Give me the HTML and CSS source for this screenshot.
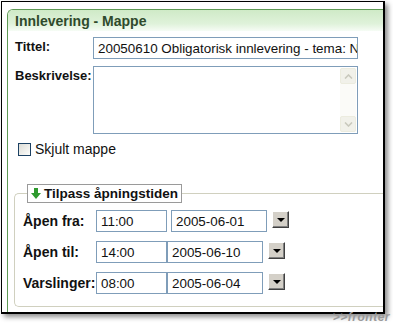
FILE: index.html
```html
<!DOCTYPE html>
<html lang="no">
<head>
  <meta charset="UTF-8">
  <title>Innlevering - Mappe</title>
  <link rel="stylesheet" href="styles.css">
</head>
<body>
  <div class="frame">
    <div class="panel">
      <div class="panel-head">Innlevering - Mappe</div>
      <div class="panel-body">
        <div class="field">
          <label class="label" for="tittel">Tittel:</label>
          <div class="input wide" id="tittel">20050610 Obligatorisk innlevering - tema: Ni</div>
        </div>
        <div class="field">
          <label class="label">Beskrivelse:</label>
          <div class="textarea">
            <div class="scroll">
              <span class="sbtn up"><svg width="9" height="5" viewBox="0 0 9 5"><path d="M1 4.5 4.5 1 8 4.5" fill="none" stroke="#c9c9bd" stroke-width="1.6"/></svg></span>
              <span class="sbtn down"><svg width="9" height="5" viewBox="0 0 9 5"><path d="M1 .5 4.5 4 8 .5" fill="none" stroke="#c9c9bd" stroke-width="1.6"/></svg></span>
            </div>
          </div>
        </div>
        <div class="check">
          <span class="box"></span>
          <span>Skjult mappe</span>
        </div>

        <div class="fieldset">
          <div class="legend">
            <svg width="10" height="11" viewBox="0 0 10 11"><path d="M3 0h4v5h3l-5 6-5-6h3z" fill="#2e9a2e"/></svg>
            Tilpass åpningstiden
          </div>
          <div class="row">
            <span class="label small">Åpen fra:</span>
            <div class="input time">11:00</div>
            <div class="input date gap">2005-06-01</div>
            <span class="pick"><i></i></span>
          </div>
          <div class="row">
            <span class="label small">Åpen til:</span>
            <div class="input time">14:00</div>
            <div class="input date">2005-06-10</div>
            <span class="pick"><i></i></span>
          </div>
          <div class="row">
            <span class="label small">Varslinger:</span>
            <div class="input time">08:00</div>
            <div class="input date">2005-06-04</div>
            <span class="pick"><i></i></span>
          </div>
        </div>
      </div>
    </div>
  </div>
  <div class="brand">&gt;&gt;fronter</div>
</body>
</html>
```

FILE: styles.css
```css
* {
  box-sizing: border-box;
}

body {
  margin: 0;
  padding: 1px 0 0 1px;
  background: #fff;
  font-family: 'Liberation Sans', Arial, sans-serif;
  font-size: 13px;
  color: #111;
  width: 393px;
  height: 323px;
  overflow: hidden;
  position: relative;
}

.frame {
  width: 384px;
  height: 313px;
  border: 1px solid #000;
  border-width: 1px 2px 2px 1px;
  background: #fff;
  box-shadow: 3px 3px 5px rgba(0, 0, 0, 0.45);
  overflow: hidden;
  padding: 7px 0 0 5px;
}

.panel {
  height: 320px;
  border: 1px solid #5f9a55;
  border-right: none;
  border-bottom: none;
  border-top-left-radius: 6px;
}

.panel-head {
  height: 21px;
  padding: 3px 0 0 7px;
  font-size: 14px;
  font-weight: bold;
  color: #2f4a2c;
  background: linear-gradient(#cfeac7, #dff2da 65%, #f6fcf5);
  border-top-left-radius: 5px;
}

.panel-body {
  padding: 6px 0 0 7px;
}

.field {
  display: flex;
  margin-bottom: 7px;
}

.label {
  font-weight: bold;
  width: 78px;
  padding-top: 2px;
}

.input {
  height: 22px;
  border: 1px solid #7f9db9;
  padding: 3px 0 0 4px;
  font-size: 13.4px;
  white-space: nowrap;
  overflow: hidden;
  background: #fff;
}

.wide {
  width: 265px;
}

.textarea {
  width: 265px;
  height: 68px;
  border: 1px solid #7f9db9;
  display: flex;
  justify-content: flex-end;
  padding: 1px;
}

.scroll {
  width: 16px;
  background: #fbfbf8;
  display: flex;
  flex-direction: column;
  justify-content: space-between;
}

.sbtn {
  height: 16px;
  background: #f1f1ea;
  border: 1px solid #ececdf;
  border-radius: 2px;
  display: flex;
  align-items: center;
  justify-content: center;
}

.check {
  display: flex;
  align-items: center;
  gap: 4px;
  margin: 3px 0 0 3px;
  font-size: 14px;
}

.box {
  width: 13px;
  height: 13px;
  border: 1px solid #1c4163;
  background: linear-gradient(135deg, #dcdcd6, #fdfdfb);
}

.fieldset {
  margin: 36px 0 0 -1px;
  height: 114px;
  border: 1px solid #d0d0bf;
  border-right: none;
  border-radius: 5px 0 0 5px;
  padding: 0 0 0 8px;
  position: relative;
}

.legend {
  display: inline-flex;
  align-items: center;
  gap: 3px;
  height: 19px;
  margin: -10px 0 0 4px;
  padding: 0 3px 0 3px;
  border: 1px solid #9a9a9a;
  background: #fff;
  font-weight: bold;
  font-size: 13.5px;
  vertical-align: top;
}

.row {
  display: flex;
  align-items: flex-start;
  margin-top: 1px;
}

.row + .row {
  margin-top: 9px;
}

.label.small {
  width: 73px;
  padding-top: 3px;
  font-size: 14px;
}

.time {
  width: 71px;
}

.date {
  width: 96px;
}

.date.gap {
  margin-left: 4px;
}

.pick {
  width: 17px;
  height: 17px;
  margin: 1px 0 0 5px;
  background: #d4d0c8;
  border: 1px solid;
  border-color: #fff #404040 #404040 #fff;
  box-shadow: inset -1px -1px 0 #808080;
  display: flex;
  align-items: center;
  justify-content: center;
}

.pick i {
  width: 0;
  height: 0;
  border-left: 4px solid transparent;
  border-right: 4px solid transparent;
  border-top: 4px solid #000;
}

.brand {
  position: absolute;
  right: 3px;
  bottom: -1px;
  font-size: 12px;
  font-style: italic;
  font-weight: bold;
  color: #9a9a9a;
  letter-spacing: 0.5px;
}
```
